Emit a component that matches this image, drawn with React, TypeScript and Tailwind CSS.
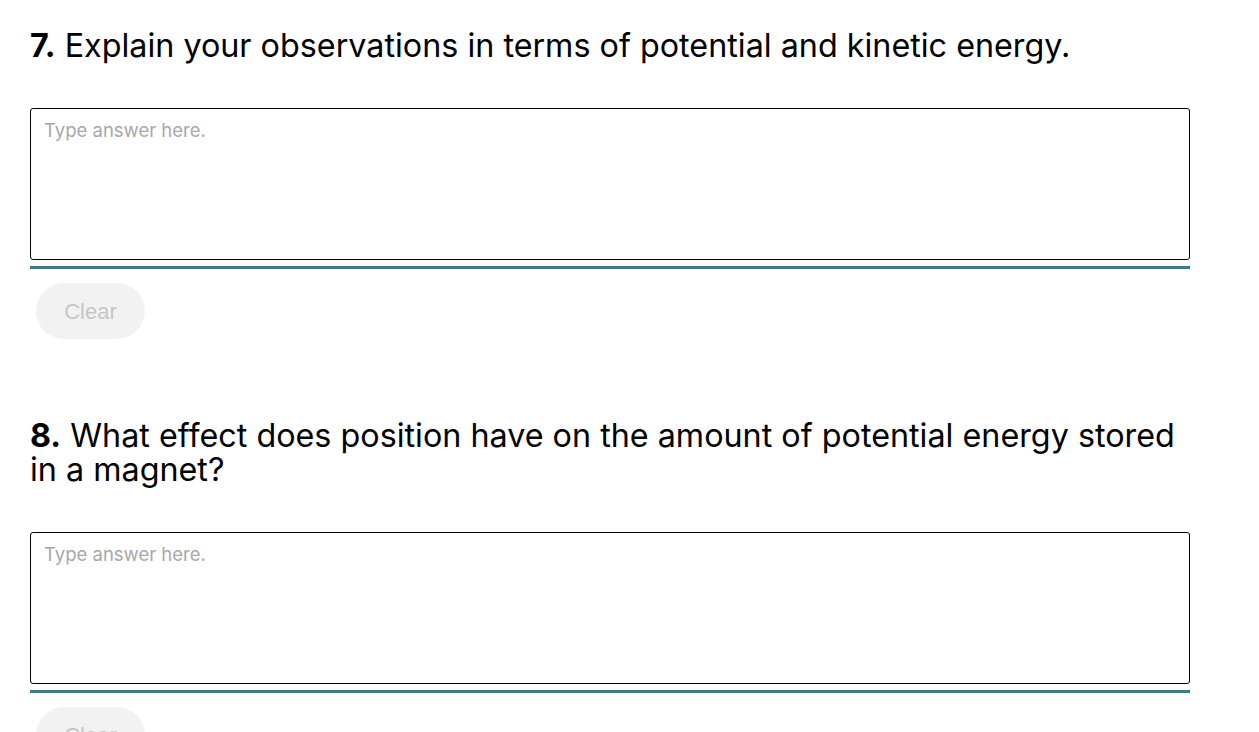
function Question({ num, text, first }: { num: string; text: string; first?: boolean }) {
  return (
    <section className={first ? "" : "mt-[80px]"}>
      <h2
        className="text-[32.3px] leading-[34px] text-black font-normal"
        style={{ fontFamily: "Inter, 'Noto Sans', sans-serif" }}
      >
        <span className="font-bold">{num}</span> {text}
      </h2>
      <textarea
        className="mt-[45px] block w-full h-[152px] border border-black rounded-[3px] resize-none px-[13px] pt-[9px] text-[18.5px] leading-[24px] text-black placeholder:text-[#a8a8a8] outline-none"
        style={{ fontFamily: "Inter, 'Noto Sans', sans-serif" }}
        placeholder="Type answer here."
      />
      <div className="mt-[6px] h-[3px] w-full bg-[#3b7e86]" />
      <button
        className="mt-[14px] ml-[6px] h-[56px] w-[109px] rounded-full bg-[#f2f2f2] text-[#c6c6c6] text-[22px]"
        style={{ fontFamily: "'Liberation Sans', Arial, sans-serif" }}
      >
        Clear
      </button>
    </section>
  );
}

export default function App() {
  return (
    <div className="bg-white h-[732px] overflow-hidden pl-[30px] pt-[29px]">
      <div className="w-[1160px]">
        <Question first num="7." text="Explain your observations in terms of potential and kinetic energy." />
        <Question num="8." text="What effect does position have on the amount of potential energy stored in a magnet?" />
      </div>
    </div>
  );
}
